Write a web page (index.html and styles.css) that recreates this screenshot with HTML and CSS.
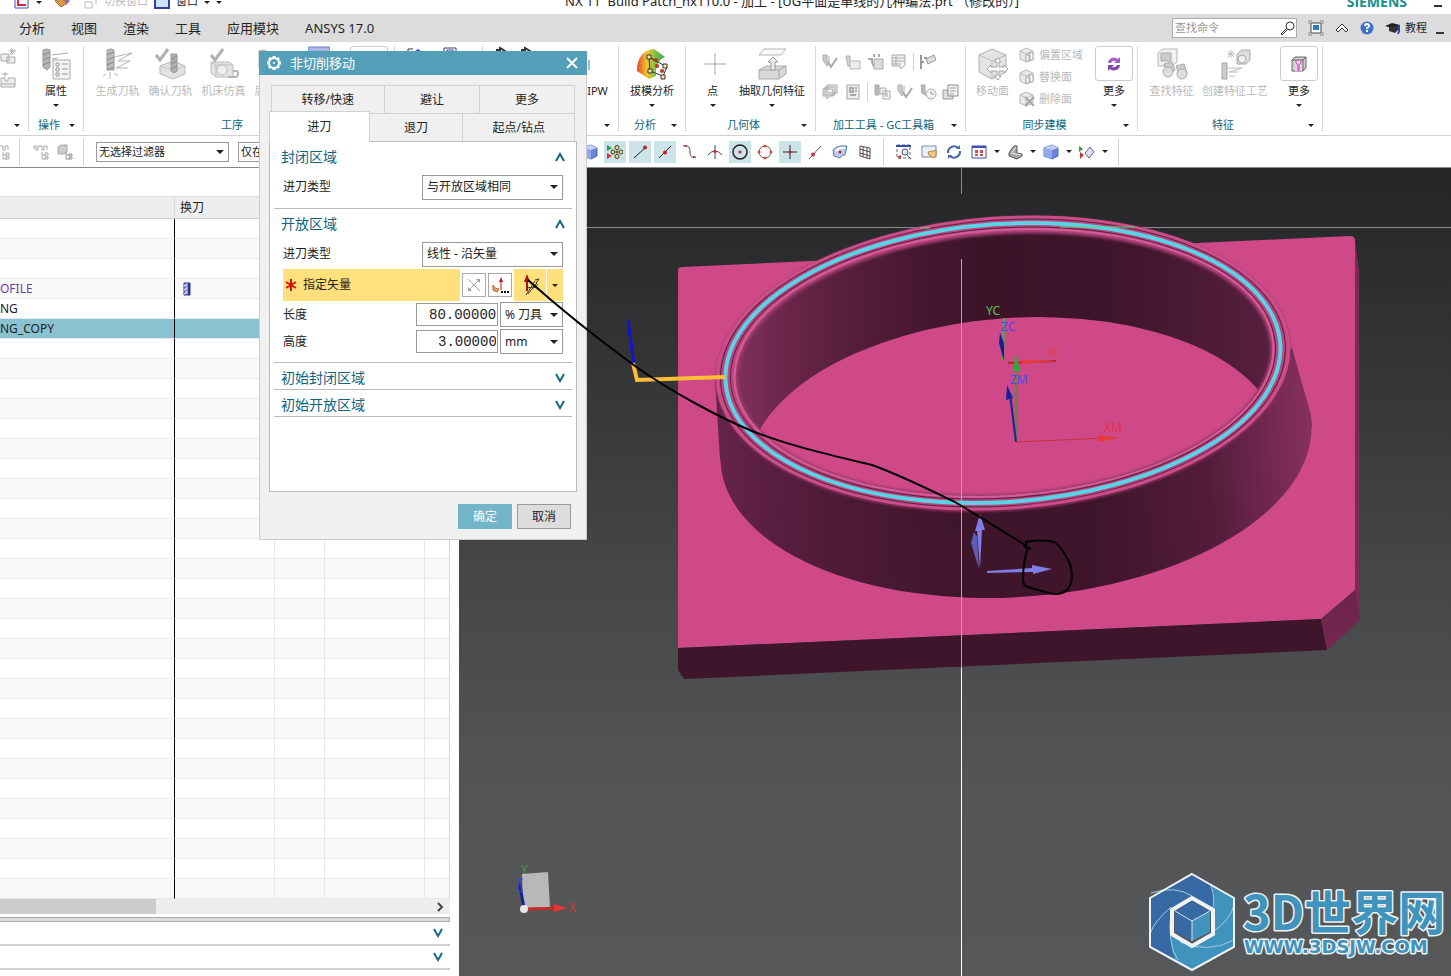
FILE: index.html
```html
<!DOCTYPE html>
<html lang="zh-CN">
<head>
<meta charset="utf-8">
<title>NX 11 - 加工</title>
<link rel="stylesheet" href="styles.css">
</head>
<body>
<svg class="defs" aria-hidden="true">
  <defs>
    <symbol id="tool" viewBox="0 0 32 32">
      <path d="M4 3q4-2 8 0v18l-4 3-4-3z" fill="#cfcfcf" stroke="#b5b5b5"/><path d="M4 8l8-4M4 13l8-4M4 18l8-4" stroke="#aaa"/>
    </symbol>
    <symbol id="i-prop" viewBox="0 0 32 32">
      <path d="M3 2q4-2 7 0v17l-3 3-4-3z" fill="#b5b5b5" stroke="#999"/><path d="M3 7l7-3M3 12l7-3M3 17l7-3" stroke="#888"/>
      <path d="M12 7l16-2M12 11l6-1" stroke="#aaa"/><path d="M13 12h17v19H13z" fill="#f4f4f4" stroke="#aaa"/>
      <path d="M16 15h3v3h-3zM16 20h3v3h-3zM16 25h3v3h-3zM22 16h6M22 21h6M22 26h6" fill="none" stroke="#999"/>
    </symbol>
    <symbol id="i-gen" viewBox="0 0 32 32">
      <path d="M5 2q4-2 7 0v20H5z" fill="#bbb" stroke="#999"/><path d="M5 7l7-3M5 12l7-3M5 17l7-3M5 22l7-3" stroke="#888"/>
      <path d="M12 9l18-4-14 8h12l-14 7h12M4 26l-3 2M8 24v7M12 25l4 3" fill="none" stroke="#b5b5b5"/>
    </symbol>
    <symbol id="i-check" viewBox="0 0 32 32">
      <path d="M5 18l13-5 12 5v8l-12 5-13-5z" fill="#e2e2e2" stroke="#bbb"/><path d="M5 18l13 4 12-4" fill="none" stroke="#c5c5c5"/>
      <path d="M16 6h6v17l-3 2-3-2z" fill="#b0b0b0" stroke="#999"/><path d="M16 11l6-3M16 16l6-3M16 21l6-3" stroke="#888"/>
      <path d="M1 7l4 5L13 1" fill="none" stroke="#b0b0b0" stroke-width="3"/>
    </symbol>
    <symbol id="i-machine" viewBox="0 0 32 32">
      <path d="M3 14h18l4 3v12H8l-5-4z" fill="#e2e2e2" stroke="#bbb"/><path d="M3 14l5 3h17M8 17v12" fill="none" stroke="#c0c0c0"/><circle cx="14" cy="22" r="5" fill="#eee" stroke="#bbb"/>
      <path d="M20 29h8q4-3 1-6h-4" fill="none" stroke="#b5b5b5" stroke-width="2"/><path d="M3 7l4 5L15 1" fill="none" stroke="#b0b0b0" stroke-width="3"/>
    </symbol>
    <symbol id="i-draft" viewBox="0 0 32 32">
      <path d="M1 23C1 10 7 2 18 1l11 8c-6 2-10 10-9 19l-7 3z" fill="url(#heat)"/>
      <path d="M13 9l1 14 13 5 4-9zM13 9l8 5" fill="none" stroke="#333"/>
      <g fill="#f3e6b8" stroke="#333"><path d="M11 7h4v4h-4zM12 21h4v4h-4zM25 27h4v4h-4zM27 16h4v4h-4z"/></g>
      <g fill="#c43030"><circle cx="20" cy="12" r="2"/><circle cx="21" cy="18" r="2"/><circle cx="26" cy="23" r="2"/></g>
    </symbol>
    <symbol id="i-point" viewBox="0 0 32 32"><path d="M18 5v22M7 16h22" stroke="#a5a5a5"/></symbol>
    <symbol id="i-extract" viewBox="0 0 32 32">
      <path d="M8 1h22l-5 6H3z" fill="#f8f8f8" stroke="#b5b5b5"/><path d="M3 22l7-4h20v8l-7 5H3z" fill="#d8d8d8" stroke="#aaa"/>
      <path d="M3 22h20l7-4M23 22v9" fill="none" stroke="#aaa"/><path d="M17 9l5 5h-3v8h-4v-8h-3z" fill="#eee" stroke="#999"/>
    </symbol>
    <symbol id="i-move" viewBox="0 0 32 32">
      <path d="M15 1l14 6v17l-14 7-13-7V7z" fill="#e4e4e4" stroke="#b0b0b0"/><path d="M2 7l13 6 14-6M15 13v18" fill="none" stroke="#bbb"/>
      <path d="M21 10l3 4h-2v5h5v-2l4 4-4 4v-2h-5v5h2l-3 4-4-4h3v-5h-6v2l-4-4 4-4v2h6v-5h-3z" fill="#fff" stroke="#a5a5a5"/>
    </symbol>
    <symbol id="i-find" viewBox="0 0 32 32">
      <path d="M2 5l5-4h14v13l-5 4H2z" fill="#f0f0f0" stroke="#b5b5b5"/><path d="M5 5h10v8H5z" fill="#ccc" stroke="#aaa"/>
      <path d="M8 16l8-2 3 8-7 6zM20 18l8-2 3 9-7 4z" fill="#ccc" stroke="#aaa"/><circle cx="12" cy="24" r="5" fill="#ddd" stroke="#aaa"/><circle cx="26" cy="26" r="5" fill="#ddd" stroke="#aaa"/>
    </symbol>
    <symbol id="i-process" viewBox="0 0 32 32">
      <path d="M18 6l5-4h8v10l-4 4h-9z" fill="#ddd" stroke="#aaa"/><circle cx="23" cy="11" r="4" fill="#eee" stroke="#aaa"/>
      <path d="M3 15h5v16H3z" fill="#ccc" stroke="#a5a5a5"/><path d="M9 20h14l-13 4h9M10 28h6M12 2v8M8 6h8M9 3l6 6M15 3L9 9" fill="none" stroke="#bbb"/>
    </symbol>
    <symbol id="i-cycle" viewBox="0 0 16 16">
      <path d="M2 7a6 6 0 0 1 10-4l2-2v6H8l2-2a4 4 0 0 0-5 2z" fill="#a05fc4"/><path d="M14 9a6 6 0 0 1-10 4l-2 2V9h6l-2 2a4 4 0 0 0 5-2z" fill="#7f4aa6"/>
    </symbol>
    <symbol id="i-block" viewBox="0 0 16 16">
      <path d="M1 4l3-3h11v11l-3 3H1z" fill="#cfcfcf" stroke="#666"/><path d="M4 4h7v11H4z" fill="#f3c7f1"/><path d="M5 4v3l2 2v6M10 4v3L8 9v6" fill="none" stroke="#c04cbf"/><path d="M12 4v11M12 4l3-3M1 4h11" stroke="#666"/>
    </symbol>
    <symbol id="i-mini" viewBox="0 0 18 18">
      <path d="M2 3h4v5l2 5H4z" fill="#d5d5d5" stroke="#aaa"/><path d="M6 8h10v8H6z" fill="#eee" stroke="#b5b5b5"/>
    </symbol>
    <symbol id="i-vee" viewBox="0 0 18 18"><path d="M2 2h4v6l2 3-2 2-4-6zM8 3v6" fill="#ccc" stroke="#aaa"/><path d="M7 9l3 5 6-9" fill="none" stroke="#a8a8a8" stroke-width="2"/></symbol>
    <symbol id="i-gears" viewBox="0 0 18 18"><path d="M7 1v3M12 1v3M1 6h4v3l2 5" fill="none" stroke="#aaa" stroke-width="2"/><path d="M7 6h9v10H7z" fill="#ddd" stroke="#aaa"/></symbol>
    <symbol id="i-sheet" viewBox="0 0 18 18"><path d="M2 2h13v10l-4 4-1-3H2zM2 5h13M2 8h13M2 11h9M6 2v10" fill="#f2f2f2" stroke="#aaa"/></symbol>
    <symbol id="i-flag" viewBox="0 0 18 18"><path d="M2 2v14M5 5h3M2 9h3" stroke="#999" stroke-width="2"/><path d="M7 6l8-4 2 5-8 4z" fill="#ddd" stroke="#999"/></symbol>
    <symbol id="i-stack" viewBox="0 0 18 18"><path d="M6 2h10v8H6zM4 4h10v8H4zM2 6h10v7H9l-3 3v-3H2z" fill="#f0f0f0" stroke="#a5a5a5"/></symbol>
    <symbol id="i-doc" viewBox="0 0 18 18"><path d="M3 2h12v14H3z" fill="#eee" stroke="#a5a5a5"/><path d="M6 5h3v4H6zM11 5h2M11 8h2M6 12h6" fill="none" stroke="#aaa" stroke-width="2"/></symbol>
    <symbol id="i-pages" viewBox="0 0 18 18"><path d="M2 2h4v10H2z" fill="#bbb" stroke="#aaa"/><path d="M7 5h6v6H7zM10 8h7v8h-7zM12 11h3M12 13h3" fill="#f3f3f3" stroke="#aaa"/></symbol>
    <symbol id="i-clock" viewBox="0 0 18 18"><path d="M2 2h4v9l2 2-5-3z" fill="#bbb" stroke="#aaa"/><circle cx="12" cy="11" r="5" fill="#f3f3f3" stroke="#aaa"/><path d="M12 8v3h3" fill="none" stroke="#999"/></symbol>
    <symbol id="i-print" viewBox="0 0 18 18"><path d="M1 7h10v9H1z" fill="#ddd" stroke="#999"/><path d="M6 2h10v11H6z" fill="#f5f5f5" stroke="#888"/><path d="M8 5h6M8 8h6M8 11h4" stroke="#999"/></symbol>
    <symbol id="i-face" viewBox="0 0 16 16"><path d="M7 1l7 3v8l-7 3-6-3V4z" fill="#e9e9e9" stroke="#b8b8b8"/><path d="M1 4l6 3 7-3M7 7v8" fill="none" stroke="#c0c0c0"/><path d="M7 8h4v6H7zM10 6h4v7h-4z" fill="#fff" stroke="#a5a5a5"/></symbol>
    <symbol id="i-delface" viewBox="0 0 16 16"><path d="M7 1l7 3v8l-7 3-6-3V4z" fill="#e9e9e9" stroke="#b8b8b8"/><path d="M1 4l6 3 7-3M7 7v8" fill="none" stroke="#c0c0c0"/><path d="M6 6l9 9M15 6l-9 9" stroke="#a5a5a5" stroke-width="2"/></symbol>
    <symbol id="i-tree" viewBox="0 0 16 16"><path d="M1 5V2h2v4h2V2h4v4h2V2h3v4M9 8v7h4M9 11h4M12 9h3v3h-3zM12 13h3v2h-3z" fill="none" stroke="#aaa"/></symbol>
    <symbol id="i-cubes" viewBox="0 0 16 16"><path d="M1 3l3-2h6v7l-3 2H1z" fill="#ccc" stroke="#aaa"/><path d="M9 8v7h4M9 11h4M12 10h3v2h-3zM12 13h3v2h-3z" fill="none" stroke="#999"/></symbol>
    <symbol id="i-burst" viewBox="0 0 16 16"><path d="M0 6h8v7H0zM6 9h8v6H6z" fill="#eee" stroke="#aaa"/><path d="M11 0v7M8 3h7M9 1l5 5M14 1L9 6" stroke="#aaa"/></symbol>
    <symbol id="i-layer" viewBox="0 0 16 16"><path d="M0 6h4v3h3V6h7v9H0zM0 12h14" fill="#eee" stroke="#aaa"/><path d="M4 0v5M1 2h6" stroke="#aaa"/></symbol>
    <symbol id="i-cube" viewBox="0 0 16 16"><path d="M1 4l8-3 6 3v8l-6 3-8-3z" fill="#6b84d6" stroke="#4f66b4"/><path d="M1 4l8 2v9l-8-3z" fill="#93a9ec"/><path d="M1 4l8-3 6 3-6 2z" fill="#c3d1fa"/></symbol>
    <linearGradient id="heat" x1="0" x2="1"><stop offset="0" stop-color="#e8442c"/><stop offset=".35" stop-color="#f2c52e"/><stop offset=".7" stop-color="#6fc043"/><stop offset="1" stop-color="#2fae56"/></linearGradient>
  </defs>
</svg>

<div class="app">
  <header class="titlebar">
    <div class="quick">
      <svg width="16" height="10" viewBox="0 0 16 10"><path d="M1-4h13v12H1z" fill="#fff" stroke="#3d50c4"/><path d="M4-3v8h8" fill="none" stroke="#d24" stroke-width="2"/></svg>
      <i class="caret"></i>
      <svg class="brush" width="18" height="10" viewBox="0 0 18 10"><path d="M3-3l9 8 4-4-6-6z" fill="#7f72c9"/><path d="M1 1l6-3 6 5-6 4z" fill="#d99a4a" stroke="#a66a22"/></svg>
      <svg width="14" height="10" viewBox="0 0 14 10"><path d="M1 2h7v6H1zM5-4h7v8" fill="none" stroke="#bbb"/></svg>
      <span class="dim">切换窗口</span>
      <svg class="win" width="16" height="10" viewBox="0 0 16 10"><path d="M1-5h14V8H1z" fill="#cfe3fb" stroke="#2d3fa8" stroke-width="2"/></svg>
      <span>窗口</span><i class="caret"></i><i class="caret"></i>
    </div>
    <h1>NX 11&nbsp; Build Patch_nx110.0 - 加工 - [UG平面是单线的几种编法.prt （修改的）]</h1>
    <strong>SIEMENS</strong>
    <i class="dash"></i>
  </header>

  <nav class="menubar">
    <a href="#">分析</a><a href="#">视图</a><a href="#">渲染</a><a href="#">工具</a><a href="#">应用模块</a><a href="#">ANSYS 17.0</a>
    <div class="search">
      <input type="search" placeholder="查找命令" aria-label="查找命令">
      <svg width="16" height="16" viewBox="0 0 16 16"><circle cx="10" cy="6" r="4" fill="#fff" stroke="#333"/><path d="M7 8l-6 6 1 1 6-6" fill="#fff" stroke="#333"/></svg>
    </div>
    <button class="flat" aria-label="全屏"><svg width="16" height="16" viewBox="0 0 16 16"><path d="M1 4V1h3M12 1h3v3M15 12v3h-3M4 15H1v-3" fill="none" stroke="#888"/><path d="M3 3h10v10H3z" fill="#fff" stroke="#444"/><path d="M5 5h6v5H5z" fill="#2f78c6"/></svg></button>
    <button class="flat" aria-label="最小化功能区"><svg width="14" height="12" viewBox="0 0 14 12"><path d="M7 2l6 6-2 2-4-4-4 4-2-2z" fill="#fff" stroke="#333"/></svg></button>
    <button class="flat" aria-label="帮助"><svg width="14" height="14" viewBox="0 0 14 14"><circle cx="7" cy="7" r="6.500" fill="#3f6fc9"/><path d="M5 5q0-2 2-2t2 2q0 1-2 2v1M7 9v2" fill="none" stroke="#fff" stroke-width="2"/></svg></button>
    <button class="flat tutorial"><svg width="16" height="14" viewBox="0 0 16 14"><path d="M0 5l7-3 8 2-5 4z" fill="#222"/><path d="M4 6v4l6 2 3-3V5z" fill="#333"/><path d="M14 4v6l-1 3" fill="none" stroke="#3344aa" stroke-width="2"/></svg>教程</button>
    <i class="dash"></i>
  </nav>

  <section class="ribbon" aria-label="功能区">
    <div class="group g0">
      <div class="tools col"><svg width="18" height="16"><use href="#i-burst"/></svg><svg width="18" height="16"><use href="#i-layer"/></svg></div>
      <div class="caption"><span></span><i class="caret"></i></div>
    </div>
    <div class="group g1">
      <div class="tools"><button class="big"><svg><use href="#i-prop"/></svg>属性<i class="caret"></i></button></div>
      <div class="caption"><span>操作</span><i class="caret"></i></div>
    </div>
    <div class="group g2">
      <div class="tools">
        <button class="big off"><svg><use href="#i-gen"/></svg>生成刀轨</button>
        <button class="big off"><svg><use href="#i-check"/></svg>确认刀轨</button>
        <button class="big off"><svg><use href="#i-machine"/></svg>机床仿真</button>
        <button class="big off post"><svg><use href="#tool"/></svg>后处理</button>
        <svg class="sheet" width="22" height="20" viewBox="0 0 22 20"><path d="M0 1h22v18H0z" fill="#a9b6e4" stroke="#7687c9"/></svg>
        <span class="frame"></span>
      </div>
      <div class="caption"><span>工序</span><i class="caret"></i></div>
    </div>
    <div class="group g3"><div class="tools spread">
      <svg width="16" height="20" viewBox="0 0 16 20"><path d="M3 19V3h5" fill="none" stroke="#333"/><path d="M10 5l3-2 3 2z" fill="#3d50c4"/></svg>
      <svg width="14" height="20" viewBox="0 0 14 20"><path d="M1 2h12v17H1zM4 4h6v4H4z" fill="#fff" stroke="#33408c"/></svg></div></div>
    <div class="group g4">
      <div class="tools ends">
        <svg width="16" height="20" viewBox="0 0 16 20"><path d="M3 4h4V2l5 3v8" fill="none" stroke="#333" stroke-width="2"/></svg>
        <svg width="16" height="20" viewBox="0 0 16 20"><path d="M3 4h4V2l5 3v8" fill="none" stroke="#333" stroke-width="2"/></svg>
        <button class="big ipw"><svg viewBox="0 0 20 32"><path d="M0 12h2v10H0z" fill="#9bbccb"/></svg>IPW</button>
      </div>
      <div class="caption"><span></span><i class="caret"></i></div>
    </div>
    <div class="group g5">
      <div class="tools"><button class="big"><svg><use href="#i-draft"/></svg>拔模分析<i class="caret"></i></button></div>
      <div class="caption"><span>分析</span><i class="caret"></i></div>
    </div>
    <div class="group g6">
      <div class="tools">
        <button class="big"><svg><use href="#i-point"/></svg>点<i class="caret"></i></button>
        <button class="big wide"><svg><use href="#i-extract"/></svg>抽取几何特征<i class="caret"></i></button>
      </div>
      <div class="caption"><span>几何体</span><i class="caret"></i></div>
    </div>
    <div class="group g7">
      <div class="tools col minis">
        <div><svg><use href="#i-vee"/></svg><svg><use href="#i-mini"/></svg><svg><use href="#i-gears"/></svg><svg><use href="#i-sheet"/></svg><i class="bar"></i><svg><use href="#i-flag"/></svg></div>
        <div><svg><use href="#i-stack"/></svg><svg><use href="#i-doc"/></svg><i class="bar"></i><svg><use href="#i-pages"/></svg><svg><use href="#i-vee"/></svg><svg><use href="#i-clock"/></svg><svg><use href="#i-print"/></svg></div>
      </div>
      <div class="caption"><span>加工工具 - GC工具箱</span><i class="caret"></i></div>
    </div>
    <div class="group g8">
      <div class="tools">
        <button class="big off"><svg><use href="#i-move"/></svg>移动面</button>
        <div class="list">
          <button class="off"><svg><use href="#i-face"/></svg>偏置区域</button>
          <button class="off"><svg><use href="#i-face"/></svg>替换面</button>
          <button class="off"><svg><use href="#i-delface"/></svg>删除面</button>
        </div>
        <button class="big more"><span class="frame"><svg><use href="#i-cycle"/></svg></span>更多<i class="caret"></i></button>
      </div>
      <div class="caption"><span>同步建模</span><i class="caret"></i></div>
    </div>
    <div class="group g9">
      <div class="tools">
        <button class="big off"><svg><use href="#i-find"/></svg>查找特征</button>
        <button class="big off craft"><svg><use href="#i-process"/></svg>创建特征工艺</button>
        <button class="big more"><span class="frame"><svg><use href="#i-block"/></svg></span>更多<i class="caret"></i></button>
      </div>
      <div class="caption"><span>特征</span><i class="caret"></i></div>
    </div>
  </section>

  <section class="toolbar" aria-label="选择条">
    <div class="lead"><svg width="16" height="16"><use href="#i-tree"/></svg></div>
    <div class="lead two"><svg width="16" height="16"><use href="#i-tree"/></svg><svg width="16" height="16"><use href="#i-cubes"/></svg></div>
    <span class="drop filter"><select aria-label="类型过滤器"><option>无选择过滤器</option></select></span>
    <span class="drop scope"><select aria-label="选择范围"><option>仅在工作部件内</option></select></span>
    <div class="snaps">
      <button aria-label="实体"><svg><use href="#i-cube"/></svg></button>
      <button class="on" aria-label="启用捕捉点"><svg viewBox="0 0 16 16"><path d="M0 1l5 3-5 3z" fill="#2f9e3c"/><path d="M0 9l5 3-5 3z" fill="#d33"/><g fill="#f6e56a" stroke="#333"><circle cx="10" cy="3.500" r="2"/><circle cx="6" cy="8" r="2"/><circle cx="14" cy="8" r="2"/><circle cx="10" cy="12.500" r="2"/><circle cx="10" cy="8" r="1"/></g></svg></button>
      <button class="on" aria-label="端点"><svg viewBox="0 0 16 16"><path d="M2 14L14 3" stroke="#222"/><circle cx="13" cy="3.500" r="2" fill="#c22"/></svg></button>
      <button class="on" aria-label="中点"><svg viewBox="0 0 16 16"><path d="M2 14L14 2" stroke="#222"/><circle cx="8" cy="8.500" r="2" fill="#c22"/></svg></button>
      <button aria-label="控制点"><svg viewBox="0 0 16 16"><path d="M1 2c6-1 7 2 7 6s1 6 6 5" fill="none" stroke="#444"/><circle cx="4" cy="2" r="1" fill="#c22"/><circle cx="12" cy="13" r="1" fill="#c22"/></svg></button>
      <button aria-label="交点"><svg viewBox="0 0 16 16"><path d="M8 1v14M1 11q7-8 14 0" fill="none" stroke="#444"/><circle cx="8" cy="7.500" r="1.500" fill="#c22"/></svg></button>
      <button class="on" aria-label="圆弧中心"><svg viewBox="0 0 16 16"><circle cx="8" cy="8" r="7" fill="none" stroke="#222" stroke-width="1.500"/><circle cx="8" cy="8" r="1.500" fill="#c22"/></svg></button>
      <button aria-label="象限点"><svg viewBox="0 0 16 16"><circle cx="8" cy="8" r="6" fill="none" stroke="#555"/><g fill="#d44"><circle cx="8" cy="2" r="1.500"/><circle cx="8" cy="14" r="1.500"/><circle cx="2" cy="8" r="1.500"/><circle cx="14" cy="8" r="1.500"/></g></svg></button>
      <button class="on" aria-label="现有点"><svg viewBox="0 0 16 16"><path d="M8 1v14M1 8h14" stroke="#222"/><circle cx="8" cy="8" r="1.500" fill="#c22"/></svg></button>
      <button aria-label="曲线上的点"><svg viewBox="0 0 16 16"><path d="M2 15L14 2" stroke="#555"/><circle cx="6" cy="10.500" r="2" fill="#c33"/></svg></button>
      <button aria-label="面上的点"><svg viewBox="0 0 16 16"><path d="M1 6q4-5 14-4l-2 9q-3-1-5 3L2 12z" fill="#b9cdf0" stroke="#5d7cb8"/><path d="M4 7q4-4 9-3" fill="none" stroke="#fff" stroke-width="2"/><circle cx="8" cy="8" r="1.500" fill="#c22"/></svg></button>
      <button aria-label="有界栅格点"><svg viewBox="0 0 16 16"><path d="M3 2l10 2v11L3 12zM6 3v10M10 3v11M3 5l10 3M3 9l10 3" fill="none" stroke="#5b4646"/></svg></button>
    </div>
    <div class="views">
      <button aria-label="适合窗口"><svg viewBox="0 0 16 16"><path d="M1 1h13v13H1z" fill="none" stroke="#666" stroke-dasharray="3 2"/><path d="M0 2h15" stroke="#2f4fb0" stroke-width="2"/><circle cx="9" cy="8" r="3" fill="#d6eafa" stroke="#555"/><path d="M11 11l4 4" stroke="#555"/><path d="M1 13l4-2v4z" fill="#c33"/></svg></button>
      <button aria-label="平移"><svg viewBox="0 0 16 16"><path d="M1 2h14v11H1z" fill="#e9eefb" stroke="#7c89ae"/><path d="M7 8l5-1 3-1v6l-3 2-4-3z" fill="#efc77c" stroke="#b58a3e"/></svg></button>
      <button aria-label="旋转"><svg viewBox="0 0 16 16"><path d="M2 9a6 6 0 0 1 10-5M14 7a6 6 0 0 1-10 5" fill="none" stroke="#4a62a8" stroke-width="2"/><path d="M10 5h4V1zM6 11H2v4z" fill="#4a62a8"/></svg></button>
      <button aria-label="布局"><svg viewBox="0 0 16 16"><path d="M1 2h14v12H1z" fill="#fff" stroke="#3a4fae"/><path d="M1 3h14" stroke="#3a4fae" stroke-width="2"/><path d="M4 6h3v3H4zM9 6h3v3H9zM4 10h3v2H4zM9 10h3v2H9z" fill="#d44a4a"/></svg></button><i class="caret"></i>
      <button aria-label="渲染样式"><svg viewBox="0 0 16 16"><path d="M2 9l4-6q2-2 4-1v7l5 1v2l-5 3-8-3z" fill="#a5a5a5" stroke="#555"/><path d="M4 9l5 1 5 1M5 8l4-5" fill="none" stroke="#eee"/></svg></button><i class="caret"></i>
      <button aria-label="定向视图"><svg><use href="#i-cube"/></svg></button><i class="caret"></i>
      <button aria-label="剖切"><svg viewBox="0 0 16 16"><path d="M0 2l4 3-4 3z" fill="#2f9e3c"/><path d="M1 8l4 3-4 4z" fill="#c33"/><path d="M6 9l5-6 4 5-5 6z" fill="#dbe3f5" stroke="#667"/></svg></button><i class="caret"></i>
    </div>
  </section>

  <main class="work">
    <aside class="navigator">
      <table>
        <thead><tr><th class="name"></th><th class="c1">换刀</th><th class="c2"></th><th class="c1"></th><th></th></tr></thead>
        <tbody>
          <tr><td><td><td><td><td></tr>
          <tr><td><td><td><td><td></tr>
          <tr><td><td><td><td><td></tr>
          <tr><td class="visited">OFILE<td><svg width="8" height="14" viewBox="0 0 8 14"><path d="M1 1h6v12H1z" fill="#8f98dd" stroke="#2c348f"/><path d="M1 4l3-2M1 8l3-2M1 12l3-2" stroke="#fff"/><path d="M5 1h2v12H5z" fill="#2c348f"/></svg><td><td><td></tr>
          <tr><td>NG<td><td><td><td></tr>
          <tr class="selected"><td>NG_COPY<td><td><td><td></tr>
          <tr><td><td><td><td><td></tr>
          <tr><td><td><td><td><td></tr>
          <tr><td><td><td><td><td></tr>
          <tr><td><td><td><td><td></tr>
          <tr><td><td><td><td><td></tr>
          <tr><td><td><td><td><td></tr>
          <tr><td><td><td><td><td></tr>
          <tr><td><td><td><td><td></tr>
          <tr><td><td><td><td><td></tr>
          <tr><td><td><td><td><td></tr>
          <tr><td><td><td><td><td></tr>
          <tr><td><td><td><td><td></tr>
          <tr><td><td><td><td><td></tr>
          <tr><td><td><td><td><td></tr>
          <tr><td><td><td><td><td></tr>
          <tr><td><td><td><td><td></tr>
          <tr><td><td><td><td><td></tr>
          <tr><td><td><td><td><td></tr>
          <tr><td><td><td><td><td></tr>
          <tr><td><td><td><td><td></tr>
          <tr><td><td><td><td><td></tr>
          <tr><td><td><td><td><td></tr>
          <tr><td><td><td><td><td></tr>
          <tr><td><td><td><td><td></tr>
          <tr><td><td><td><td><td></tr>
          <tr><td><td><td><td><td></tr>
          <tr><td><td><td><td><td></tr>
          <tr><td><td><td><td><td></tr>
        </tbody>
      </table>
      <div class="scroll"><span class="thumb"></span><svg width="8" height="10" viewBox="0 0 8 10"><path d="M2 1l4 4-4 4" fill="none" stroke="#444" stroke-width="2"/></svg></div>
      <div class="splitter"></div>
      <button class="fold" aria-label="相关性"><svg class="chev" viewBox="0 0 12 10"><path d="M2 1l4 7 4-7" /></svg></button>
      <button class="fold" aria-label="细节"><svg class="chev" viewBox="0 0 12 10"><path d="M2 1l4 7 4-7" /></svg></button>
    </aside>

    <section class="viewport" aria-label="图形窗口">
      <svg class="scene" viewBox="459 168 992 808" preserveAspectRatio="xMinYMin meet">
        <defs>
          <linearGradient id="wall" gradientUnits="userSpaceOnUse" x1="716" x2="1312" y1="0" y2="0">
            <stop offset="0" stop-color="#65234a"/><stop offset=".12" stop-color="#551d3d"/><stop offset=".4" stop-color="#3e152a"/><stop offset=".62" stop-color="#3e152a"/><stop offset=".82" stop-color="#531c3a"/><stop offset="1" stop-color="#86305f"/>
          </linearGradient>
          <linearGradient id="bore" gradientUnits="userSpaceOnUse" x1="737" x2="1272" y1="0" y2="0">
            <stop offset="0" stop-color="#80305b"/><stop offset=".12" stop-color="#652446"/><stop offset=".3" stop-color="#4b1933"/><stop offset=".45" stop-color="#3c1428"/><stop offset=".7" stop-color="#3e152a"/><stop offset="1" stop-color="#57203f"/>
          </linearGradient>
          <linearGradient id="side" gradientUnits="userSpaceOnUse" x1="0" x2="0" y1="590" y2="650"><stop offset="0" stop-color="#6d2449"/><stop offset="1" stop-color="#742751"/></linearGradient>
          <clipPath id="inside"><ellipse cx="1004" cy="364" rx="268" ry="131" transform="rotate(-4 1004 364)"/></clipPath>
          <filter id="soft" x="-5%" y="-5%" width="110%" height="110%"><feGaussianBlur stdDeviation="1"/></filter>
        </defs>
        <path d="M587 227.500H1451M961.500 168v26" stroke="#8c8c8c"/>
        <path d="M1350 236l5 4 4 30 1 350-5-30z" fill="#7c2a54"/>
        <path d="M682 267L1350 236q5 0 5 5V590L1321 619 678 648V271q0-4 4-4z" fill="#cf4989"/>
        <path d="M678 648L1321 619l6 31L684 679l-6-9z" fill="#3e152a"/>
        <path d="M1321 619l34-29 5 30-33 30z" fill="url(#side)"/>
        <path d="M715 378L720 460 1016 520 1312 428 1311 415 1292 348z" fill="url(#wall)"/>
        <ellipse cx="1016" cy="443" rx="296" ry="154" transform="rotate(-4 1016 443)" fill="url(#wall)"/>
        <ellipse cx="1003" cy="364" rx="288" ry="147" transform="rotate(-4 1003 364)" fill="#8f3361" filter="url(#soft)"/>
        <ellipse cx="1003" cy="363" rx="288" ry="146" transform="rotate(-4 1003 363)" fill="#bd4680"/>
        <g fill="none">
          <ellipse cx="1003" cy="363" rx="286" ry="145" transform="rotate(-4 1003 363)" stroke="#c94e89" stroke-width="3"/>
          <ellipse cx="1003" cy="363" rx="283" ry="143" transform="rotate(-4 1003 363)" stroke="#5c2140"/>
        </g>
        <g clip-path="url(#inside)">
          <path d="M720 210h570v300H720z" fill="url(#bore)"/>
          <ellipse cx="1014" cy="457" rx="266" ry="139" transform="rotate(-4 1014 457)" fill="#cf4989"/>
          <path d="M744 430q50 60 240 70 200-10 280-110l30 150H720z" fill="#cf4989"/>
        </g>
        <g fill="none">
          <ellipse cx="1004" cy="364" rx="268" ry="131" transform="rotate(-4 1004 364)" stroke="#9c3a6c" stroke-width="3" filter="url(#soft)"/>
          <ellipse cx="1004" cy="363" rx="270" ry="133" transform="rotate(-4 1004 363)" stroke="#d55c99" stroke-width="2"/>
          <ellipse cx="1003" cy="363" rx="273" ry="135" transform="rotate(-4 1003 363)" stroke="#5c2140"/>
          <ellipse cx="1003" cy="363" rx="278" ry="139" transform="rotate(-4 1003 363)" stroke="#58d4e6" stroke-width="4"/>
        </g>
        <path d="M1060 227h75M920 228h10" stroke="#61d67e"/>
        <path d="M961.500 259V668" stroke="#a5b985"/><path d="M961.500 668V976" stroke="#fff"/>
        <path d="M628 320l6 45" stroke="#1414d0" stroke-width="3"/><path d="M633 363l4 17 88-3" fill="none" stroke="#ffbd38" stroke-width="4"/>
        <g class="axis">
          <path d="M1004 318l-1 42" stroke="#36b943" stroke-width="2"/><path d="M1000 333l4 10v18l-5-18z" fill="#10208f"/><path d="M1008 363l48-2" stroke="#b52730" stroke-width="2"/><path d="M1022 360l35 1-35 3z" fill="#e53b3b"/>
          <path d="M1016 442V356" stroke="#7d7655" stroke-width="3"/><path d="M1016 355l4 16h-7z" fill="#27ae35"/><path d="M1016 442l-6-48" stroke="#12239b" stroke-width="2"/><path d="M1007 385l6 13-7 2z" fill="#12239b"/>
          <path d="M1016 442l90-4" stroke="#c2303a"/><path d="M1098 435l21 3-20 4z" fill="#e63a3a"/>
          <text x="986" y="315" fill="#55c45a">YC</text><text x="1001" y="331" fill="#4949ed">ZC</text><text x="1046" y="356" fill="#dc3f4e">XC</text>
          <text x="1010" y="384" fill="#4949ed">ZM</text><text x="1104" y="432" fill="#dc3348">XM</text>
          <text x="521" y="874" fill="#46a046">Y</text>
        </g>
        <g fill="#7f7de6"><path d="M980 514l5 16h-3l-2 39-3-38h-2z"/><path d="M974 532l3 5 2 32-8-26z" fill="#5f5cb6"/><path d="M987 571l45-3v-3l20 4-19 5v-2l-46 1z"/></g>
        <path d="M522 874l26-2 2 35-27 1z" fill="#b8b8b8"/>
        <path d="M524 908l-4-22" stroke="#12239b" stroke-width="3"/><path d="M518 879h5M520 879l2 14-4-4z" fill="#12239b" stroke="#3344cc"/><path d="M526 909l40-1" stroke="#c52c2c" stroke-width="3"/><path d="M554 904l13 4-13 4z" fill="#e33838"/><circle cx="524" cy="909" r="4" fill="#e5e5ec"/>
        <text class="triad" x="569" y="912">X</text>
      </svg>
      <svg class="brand" width="304" height="110" viewBox="1146 868 304 110" role="img" aria-label="3D世界网">
        <path d="M1192 874l42 24v49l-42 23-42-23v-49z" fill="#3f93bd"/>
        <path d="M1192 874l20 12q4 14 1 26l-21-14-21 12v30q0 14 6 24l-27-17v-49z" fill="#3769a4"/>
        <g fill="none" stroke="#a8c8e0"><path d="M1151 893q24-8 41 3M1171 907q-18 16-20 25M1171 910q-4 34 7 50M1180 942q28 12 54-2M1213 932q19-14 21-28M1211 886q5 12 1 26"/></g>
        <path d="M1192 874l42 24v49l-42 23-42-23v-49z" fill="none" stroke="#eef3f6" stroke-width="2"/>
        <path d="M1192 898l21 12v24l-21 12-20-12v-24z" fill="#555657" stroke="#eef3f6" stroke-width="4"/>
        <path d="M1192 901l18 10-18 10-17-10z" fill="#3769a4"/><path d="M1175 911l17 10v20l-17-9z" fill="#3769a4"/><path d="M1210 911l-18 10v20l18-9z" fill="#3f93bd"/><path d="M1175 911l17 10 18-10M1192 921v20" fill="none" stroke="#d5e4ee"/>
        <text class="big-name" x="1243" y="930">3D世界网</text>
        <text class="url" x="1244" y="953">WWW.3DSJW.COM</text>
      </svg>
    </section>
  </main>

  <form class="dialog" role="dialog" aria-labelledby="dlg-title">
    <div class="dlg-bar">
      <svg width="16" height="16" viewBox="0 0 16 16"><circle cx="8" cy="8" r="5" fill="none" stroke="#fff" stroke-width="2"/><path d="M8 1v2M8 13v2M1 8h2M13 8h2M3 3l2 2M11 11l2 2M13 3l-2 2M5 11l-2 2" stroke="#fff" stroke-width="3"/><circle cx="8" cy="8" r="1" fill="#fff"/></svg>
      <h2 id="dlg-title">非切削移动</h2>
      <button type="button" aria-label="关闭"><svg width="12" height="12" viewBox="0 0 12 12"><path d="M1 1l10 10M11 1L1 11" stroke="#fff" stroke-width="2"/></svg></button>
    </div>
    <div class="tabs back"><button type="button">转移/快速</button><button type="button">避让</button><button type="button">更多</button></div>
    <div class="tabs front"><button type="button" class="active">进刀</button><button type="button">退刀</button><button type="button">起点/钻点</button></div>
    <div class="pane">
      <section>
        <h3>封闭区域<svg class="chev" viewBox="0 0 12 10"><path d="M2 9l4-7 4 7"/></svg></h3>
        <div class="row"><label for="closed-type">进刀类型</label><span class="drop wide"><select id="closed-type"><option>与开放区域相同</option></select></span></div>
      </section>
      <section>
        <h3>开放区域<svg class="chev" viewBox="0 0 12 10"><path d="M2 9l4-7 4 7"/></svg></h3>
        <div class="row"><label for="open-type">进刀类型</label><span class="drop wide"><select id="open-type"><option>线性 - 沿矢量</option></select></span></div>
        <div class="row vector">
          <span class="need"><svg width="12" height="12" viewBox="0 0 12 12"><path d="M6 0v12M1 3l10 6M11 3L1 9" stroke="#d0140c" stroke-width="2"/></svg>指定矢量</span>
          <button type="button" class="sq" aria-label="反向"><svg width="16" height="16" viewBox="0 0 16 16"><path d="M2 2l12 12M2 14L14 2" stroke="#aab"/><path d="M10 2h4v4zM2 10v4h4z" fill="#99a"/></svg></button>
          <button type="button" class="sq" aria-label="矢量对话框"><svg width="18" height="18" viewBox="0 0 18 18"><path d="M10 14V4" stroke="#b3140c"/><path d="M10 1l2 5H8z" fill="#b3140c"/><path d="M2 9v5l4 2 2-3-4-1z" fill="#e9a069" stroke="#b9622b"/><path d="M10 16h2M13 16h2M16 16h2" stroke="#111" stroke-width="2"/></svg></button>
          <button type="button" class="pick" aria-label="自动判断的矢量"><svg width="20" height="24" viewBox="0 0 20 24"><path d="M7 18V6" stroke="#a3140c" stroke-width="2"/><path d="M7 1l3 8H4z" fill="#a3140c"/><path d="M6 22L15 8M15 7l4-1-3 4q3 1 0 4l-3 1M6 15l8-1M8 21l8-10" fill="none" stroke="#333"/></svg></button>
          <button type="button" class="pick slim" aria-label="更多矢量"><i class="caret"></i></button>
        </div>
        <div class="row tight"><label for="len">长度</label><input id="len" value="80.00000"><span class="drop unit"><select aria-label="长度单位"><option>% 刀具</option></select></span></div>
        <div class="row tight"><label for="hgt">高度</label><input id="hgt" class="short" value="3.00000"><span class="drop unit"><select aria-label="高度单位"><option>mm</option></select></span></div>
      </section>
      <section class="shut"><h3>初始封闭区域<svg class="chev" viewBox="0 0 12 10"><path d="M2 1l4 7 4-7"/></svg></h3></section>
      <section class="shut"><h3>初始开放区域<svg class="chev" viewBox="0 0 12 10"><path d="M2 1l4 7 4-7"/></svg></h3></section>
    </div>
    <div class="actions"><button type="submit" class="ok">确定</button><button type="button">取消</button></div>
  </form>

  <svg class="ink" width="1100" height="620" viewBox="0 0 1100 620" aria-hidden="true">
    <path d="M528 280Q575 322 635 366C670 391 720 418 752 431C790 446 830 455 872 465C900 475 930 490 955 502Q995 526 1028 547M1023 545l8 4M1028 547q-5 15-5 32 0 7 5 8l17 5q14 5 22-2 8-9 3-26-7-15-15-22-13-3-29 0 1 3-1 6"/>
  </svg>
</div>
</body>
</html>
```
FILE: styles.css
```css
* { box-sizing: border-box; }
body {
  margin: 0;
  font: 12px/16px "Noto Sans", "Noto Sans CJK SC", sans-serif;
  color: #222;
  background: #fff;
}
button, input, select { font: inherit; color: inherit; margin: 0; }
button { padding: 0; border: 0; background: none; }
h1, h2, h3 { margin: 0; font-weight: 400; }
svg { flex: none; }
.defs { position: absolute; width: 0; height: 0; }
.app { position: relative; display: flex; flex-direction: column; min-height: 100vh; overflow: hidden; }

.caret { flex: none; width: 0; height: 0; border: 3px solid transparent; border-top-color: #222; border-bottom: 0; }
.chev { width: 12px; height: 10px; fill: none; stroke: #14687f; stroke-width: 2; }
.dash { width: 8px; height: 2px; background: #333; }

/* title bar */
.titlebar { display: flex; height: 14px; line-height: 2px; overflow: hidden; align-items: flex-start; }
.quick { display: flex; width: 565px; padding-left: 14px; gap: 6px; font-size: 11px; }
.quick .caret { margin-top: 1px; }
.quick .brush { margin: 0 6px; }
.dim { color: #bbb; }
.titlebar h1 { flex: 1; font-size: 13px; line-height: 2px; white-space: nowrap; }
.titlebar strong { font: 700 14px/4px "Open Sans", sans-serif; color: #138f8c; margin-right: 27px; }
.titlebar .dash { margin: 5px 9px 0 0; }

/* menu bar */
.menubar { display: flex; align-items: center; height: 28px; padding: 0 7px 0 19px; background: #dcdcdc; }
.menubar a { margin-right: 26px; font-size: 13px; color: #222; text-decoration: none; }
.search { display: flex; align-items: center; width: 125px; height: 20px; margin: 0 11px 0 auto; background: #fff; border: 1px solid #aaa; }
.search input { flex: 1; min-width: 0; border: 0; padding: 0 0 0 2px; font-size: 11px; outline: 0; appearance: none; }
.search input::placeholder { color: #999; }
.flat { display: flex; align-items: center; margin-right: 11px; }
.flat.tutorial { gap: 4px; margin: 0 9px 0 0; font-size: 11px; }
.menubar .dash { margin-top: 10px; }

/* ribbon */
.ribbon { display: flex; height: 94px; padding: 4px 0; border-bottom: 1px solid #d0d0d0; font-size: 11px; }
.group { display: flex; flex-direction: column; flex: none; border-right: 1px solid #d8d8d8; }
.g0 { width: 29px; } .g1 { width: 55px; } .g2 { width: 311px; } .g3 { width: 88px; } .g4 { width: 136px; }
.g5 { width: 67px; } .g6 { width: 130px; } .g7 { width: 150px; } .g8 { width: 172px; } .g9 { width: 185px; }
.tools { display: flex; flex: 1; min-height: 0; }
.g1 .tools, .g5 .tools { justify-content: center; }
.g2 .tools { padding-left: 7px; }
.g9 .tools { padding-left: 7px; }
.tools.col { flex-direction: column; gap: 8px; padding-top: 2px; }
.tools.spread { gap: 22px; padding-left: 10px; }
.tools.ends { gap: 9px; padding-left: 10px; }
.big { display: flex; flex-direction: column; align-items: center; min-width: 53px; padding-top: 2px; white-space: nowrap; line-height: 16px; }
.big > svg { width: 32px; height: 32px; margin-bottom: 3px; }
.big .caret { margin-top: 5px; }
.big.wide { min-width: 64px; }
.big.craft { min-width: 74px; }
.big.post { min-width: 42px; }
.big.ipw { min-width: 21px; margin: 0 10px 0 auto; }
.big.ipw > svg { width: 20px; }
.g6 .wide { margin-left: auto; padding-right: 10px; }
.off { color: #b9b9b9; }
.frame { display: flex; align-items: center; justify-content: center; width: 38px; height: 35px; border: 1px solid #ccc; border-radius: 3px; }
.frame svg { width: 16px; height: 16px; }
.g2 .sheet { margin: 0 20px 0 16px; }
.big.more { min-width: 38px; margin: 0 4px 0 auto; padding: 0; }
.big.more .frame { margin-bottom: 2px; }
.list { display: flex; flex-direction: column; gap: 6px; padding-top: 1px; }
.list button { display: flex; align-items: center; gap: 4px; height: 16px; }
.list svg { width: 16px; height: 16px; }
.tools.minis { gap: 12px; padding: 7px 0 0 5px; }
.minis div { display: flex; align-items: center; gap: 5px; height: 18px; }
.minis svg { width: 18px; height: 18px; }
.minis .bar { width: 1px; height: 18px; background: #d0d0d0; }
.caption { display: flex; align-items: center; height: 16px; padding-right: 8px; margin-bottom: -2px; color: #0c6480; white-space: nowrap; }
.caption span { flex: 1; text-align: center; }

/* selection bar */
.toolbar { display: flex; align-items: center; height: 32px; border-bottom: 1px solid #888; font-size: 11px; }
.lead { display: flex; align-items: center; width: 20px; height: 26px; border-right: 1px solid #d0d0d0; }
.lead svg { margin-left: -6px; }
.lead.two { width: 64px; gap: 8px; padding-left: 13px; }
.lead.two svg { margin-left: 0; }
.drop { position: relative; display: flex; }
.drop::after { content: ""; position: absolute; right: 5px; top: 50%; margin-top: -2px; border: 4px solid transparent; border-top-color: #222; border-bottom: 0; pointer-events: none; }
.drop select { width: 100%; height: 20px; padding: 0 14px 0 2px; border: 1px solid #999; border-radius: 0; background: #fff; appearance: none; }
.filter { width: 133px; margin: 0 9px 0 12px; }
.scope { width: 338px; }
.snaps, .views { display: flex; align-items: center; height: 26px; }
.snaps { gap: 3px; width: 308px; padding-left: 3px; border-right: 1px solid #d0d0d0; }
.toolbar button { display: flex; align-items: center; justify-content: center; width: 22px; height: 22px; }
.toolbar button svg { width: 16px; height: 16px; }
.on { background: #cce4e9; }
.views { gap: 3px; padding: 0 9px; border-right: 1px solid #d0d0d0; }
.views .caret { margin: 0 1px; }

/* navigator */
.work { display: flex; flex: 1; }
.navigator { flex: none; width: 450px; margin-right: 9px; padding-top: 28px; }
.navigator table { width: 450px; table-layout: fixed; border-spacing: 0; border-right: 1px solid #ccd8da; border-top: 1px solid #ddd; }
.navigator th { height: 22px; padding: 0 5px; background: #eee; border-right: 1px solid #ddd; border-bottom: 1px solid #ccc; font-weight: 400; text-align: left; }
.name { width: 175px; }
.c1 { width: 100px; }
.c2 { width: 50px; }
.navigator td { height: 20px; padding: 0; border-right: 1px solid #e8e8e8; border-bottom: 1px solid #e8e8e8; line-height: 16px; white-space: nowrap; }
.navigator td:first-child { border-right-color: #000; }
.navigator td:last-child { border-right: 0; }
.navigator tr:nth-child(even) td { background: #f9f9f9; }
.navigator .selected td, .navigator tr.selected:nth-child(even) td { background: #8bc2d0; }
.navigator td svg { display: block; margin-left: 8px; }
.navigator .visited { color: #6b3fa8; }
.scroll { display: flex; align-items: center; justify-content: space-between; height: 15px; padding-right: 6px; background: #eee; }
.thumb { width: 156px; height: 15px; background: #ccc; }
.splitter { height: 5px; margin-top: 3px; background: #ddd; border: 1px solid #aaa; border-left: 0; }
.fold { display: flex; align-items: center; justify-content: flex-end; width: 100%; height: 24px; padding-right: 6px; border-bottom: 2px solid #d0d0d0; }

/* graphics window */
.viewport { position: relative; flex: 1; background: linear-gradient(#232526, #303233 20%, #454647 50%, #535455 75%, #565758); }
.scene { position: absolute; inset: 0; width: 100%; height: 100%; }
.axis text, .triad { font: 12px "Noto Sans", sans-serif; }
.triad { fill: #d63a3a; }
.brand { position: absolute; right: 1px; bottom: -2px; }
.big-name, .url { fill: #3f93bd; stroke: #eef3f6; stroke-width: 3px; paint-order: stroke; stroke-linejoin: round; }
.big-name { font: 700 47px "Noto Sans CJK SC", sans-serif; }
.url { font: 700 18px "DejaVu Sans", sans-serif; }

/* dialog */
.dialog { position: absolute; left: 259px; top: 51px; width: 328px; padding-bottom: 10px; background: #f0f0f0; border: 1px solid #ccc; border-top: 0; }
.dlg-bar { display: flex; align-items: center; gap: 8px; height: 24px; margin: 0 -1px; padding: 0 9px 0 7px; background: #539fb7; color: #fff; }
.dlg-bar h2 { flex: 1; font-size: 13px; }
.dlg-bar button { display: flex; }
.tabs { display: flex; margin: 0 11px; }
.tabs button { height: 28px; border: 1px solid #d0d0d0; border-width: 1px 1px 0 0; }
.tabs.back { margin-top: 10px; border-left: 1px solid #d0d0d0; }
.back button:nth-child(1) { flex: 113; } .back button:nth-child(2) { flex: 96; } .back button:nth-child(3) { flex: 95; }
.tabs.front { margin: -2px 11px 0 9px; align-items: flex-end; }
.front button:nth-child(1) { flex: 100; } .front button:nth-child(2) { flex: 94; } .front button:nth-child(3) { flex: 112; }
.front .active { height: 31px; margin-bottom: -1px; background: #fff; border-left-width: 1px; z-index: 1; }
.pane { height: 351px; margin: 0 9px; padding: 0 4px; background: #fff; border: 1px solid #bbb; }
.pane section { padding: 0 9px 6px; border-bottom: 1px solid #bbb; }
.pane section + section { padding-bottom: 7px; }
.pane h3 { display: flex; align-items: center; justify-content: space-between; height: 30px; margin: 0 -3px 0 -2px; font-size: 14px; color: #0f6480; }
.pane section.shut { padding-bottom: 0; }
.pane .shut h3 { height: 26px; padding-top: 4px; }
.row { display: flex; align-items: center; height: 30px; }
.row label { flex: 1; }
.row .drop select { height: 25px; padding-left: 4px; }
.drop.wide { width: 141px; }
.drop.unit { width: 63px; }
.row.tight { height: 27px; gap: 2px; }
.row input { width: 82px; height: 23px; padding: 0 1px 0 12px; border: 1px solid #999; font: 14px "Liberation Mono", monospace; }
.row input.short { padding-left: 21px; }
.row.vector { height: 32px; gap: 2px; }
.need { display: flex; align-items: center; flex: 1; gap: 6px; height: 32px; padding-left: 2px; background: #ffe07a; }
.sq { display: flex; align-items: center; justify-content: center; width: 24px; height: 24px; border: 1px solid #aaa; background: #fff; }
.pick { display: flex; align-items: center; justify-content: center; width: 32px; height: 32px; background: #ffe07a; }
.pick.slim { width: 16px; margin-left: -1px; }
.actions { display: flex; justify-content: flex-end; gap: 5px; margin: 12px 15px 0; }
.actions button { width: 54px; height: 25px; background: #ddd; border: 1px solid #999; }
.actions .ok { background: #74b4c8; border-color: #74b4c8; color: #fff; }

/* hand-drawn markup */
.ink { position: absolute; left: 0; top: 0; pointer-events: none; fill: none; stroke: #000; stroke-width: 2; }
```
